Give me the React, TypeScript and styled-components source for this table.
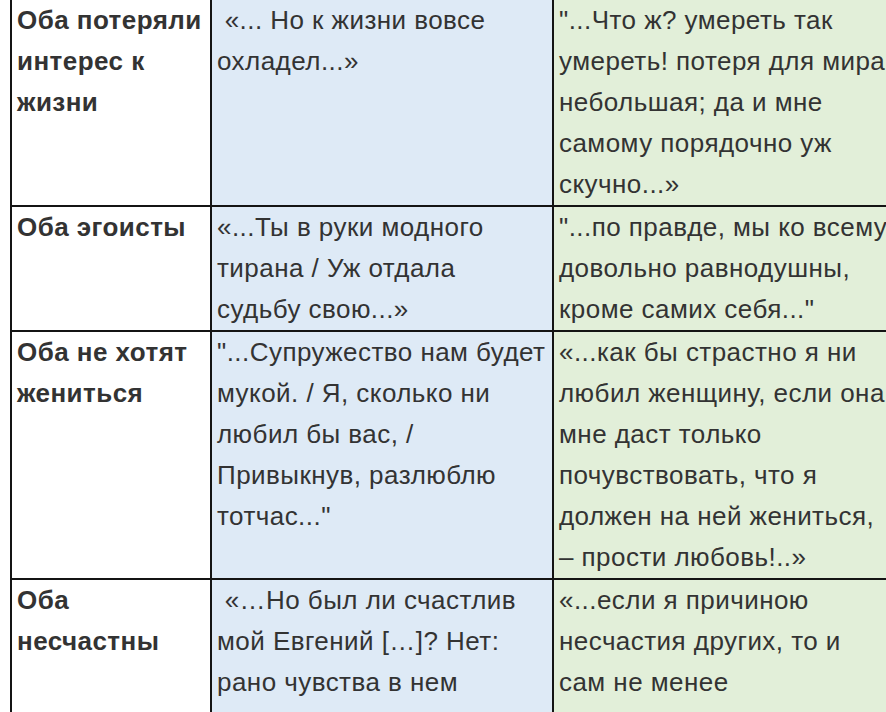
import styled, { createGlobalStyle } from "styled-components";

const GlobalStyle = createGlobalStyle`
  html, body {
    margin: 0;
    padding: 0;
    background: #ffffff;
  }
`;

type Row = {
  title: string;
  onegin: string;
  pechorin: string;
};

const rows: Row[] = [
  {
    title: "Оба потеряли интерес к жизни",
    onegin: " «... Но к жизни вовсе охладел...»",
    pechorin:
      "\"...Что ж? умереть так умереть! потеря для мира небольшая; да и мне самому порядочно уж скучно...»",
  },
  {
    title: "Оба эгоисты",
    onegin: "«...Ты в руки модного тирана / Уж отдала судьбу свою...»",
    pechorin:
      "\"...по правде, мы ко всему довольно равнодушны, кроме самих себя...\"",
  },
  {
    title: "Оба не хотят жениться",
    onegin:
      "\"...Супружество нам будет мукой. / Я, сколько ни любил бы вас, / Привыкнув, разлюблю тотчас...\"",
    pechorin:
      "«...как бы страстно я ни любил женщину, если она мне даст только почувствовать, что я должен на ней жениться, – прости любовь!..»",
  },
  {
    title: "Оба несчастны",
    onegin:
      " «…Но был ли счастлив мой Евгений […]? Нет: рано чувства в нем остыли…»",
    pechorin:
      "«...если я причиною несчастия других, то и сам не менее несчастлив...»",
  },
];

const Viewport = styled.div`
  width: 886px;
  height: 712px;
  overflow: hidden;
  padding-left: 10px;
  box-sizing: border-box;
`;

const Table = styled.table`
  margin-top: -2px;
  border-collapse: collapse;
  table-layout: fixed;
  width: 884px;
  font-family: "Liberation Sans", Arial, sans-serif;
  font-size: 26px;
  letter-spacing: 0.45px;
  line-height: 41px;
  color: #333333;
`;

const Col = styled.col<{ $w: number }>`
  width: ${(p) => p.$w}px;
`;

const Cell = styled.td<{ $tone: "white" | "blue" | "green"; $bold?: boolean }>`
  border: 2px solid #141414;
  padding: 0 6px 0 5px;
  vertical-align: top;
  white-space: pre-wrap;
  font-weight: ${(p) => (p.$bold ? 700 : 400)};
  background: ${(p) =>
    p.$tone === "blue" ? "#deeaf6" : p.$tone === "green" ? "#e2efd9" : "#ffffff"};
`;

export default function App() {
  return (
    <>
      <GlobalStyle />
      <Viewport>
        <Table>
          <colgroup>
            <Col $w={200} />
            <Col $w={342} />
            <Col $w={342} />
          </colgroup>
          <tbody>
            {rows.map((r) => (
              <tr key={r.title}>
                <Cell $tone="white" $bold>
                  {r.title}
                </Cell>
                <Cell $tone="blue">{r.onegin}</Cell>
                <Cell $tone="green">{r.pechorin}</Cell>
              </tr>
            ))}
          </tbody>
        </Table>
      </Viewport>
    </>
  );
}
